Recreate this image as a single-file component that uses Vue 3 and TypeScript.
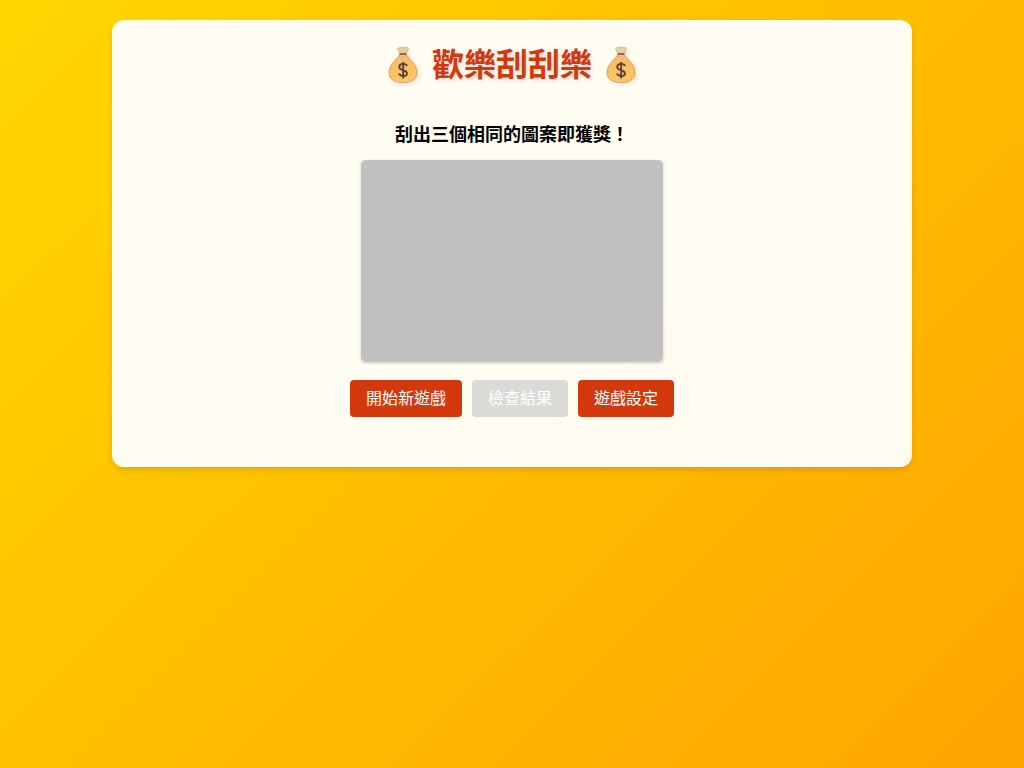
<script setup lang="ts">
import { onMounted, ref } from 'vue'

const card = ref<HTMLCanvasElement | null>(null)
const checkable = ref<boolean>(false)

function cover(): void {
  const ctx = card.value?.getContext('2d')
  if (!ctx) return
  ctx.fillStyle = '#c0c0c0'
  ctx.fillRect(0, 0, 300, 200)
}

onMounted(cover)
</script>

<template>
  <div class="page">
    <svg class="defs" width="0" height="0" aria-hidden="true">
      <defs>
        <linearGradient id="bag-fill" x1="0" y1="0" x2="0" y2="1">
          <stop offset="0" stop-color="#f3b974" />
          <stop offset="0.45" stop-color="#f9bf66" />
          <stop offset="1" stop-color="#ffc765" />
        </linearGradient>
        <symbol id="money-bag" viewBox="0 0 30 38">
          <path d="M12 8C11.300 6 10.200 4 9.500 2.500C10.500 1.300 12 2 13 1.600C14.500 1 15.500 1.800 16.500 1.500C18 1.200 19.800 1.500 20.500 2.500C19.800 4 18.700 6 18 8Z" fill="#e8cda3" stroke="#cda974" stroke-width="0.7" />
          <path d="M12 8C9.500 13 1 18 1 26.500C1 33.500 7 36.500 15 36.500S29 33.500 29 26.500C29 18 20.500 13 18 8Z" fill="url(#bag-fill)" stroke="#cc9850" stroke-width="0.8" />
          <path d="M12.200 8H17.800" fill="none" stroke="#79563f" stroke-width="1.600" stroke-linecap="round" />
          <path d="M19 20C18 17 11.200 17 11.200 21C11.200 25 19 23.500 19 27.500C19 31.300 12 30.500 11 27.500M15.200 16V32.500" fill="none" stroke="#5d4037" stroke-width="1.9" />
        </symbol>
      </defs>
    </svg>
    <main class="panel">
      <h1>
        <svg class="bag" role="img" aria-label="💰"><use href="#money-bag" /></svg>
        <span>歡樂刮刮樂</span>
        <svg class="bag" role="img" aria-label="💰"><use href="#money-bag" /></svg>
      </h1>
      <section class="game">
        <h3>刮出三個相同的圖案即獲獎！</h3>
        <canvas ref="card" class="card" width="300" height="200"></canvas>
        <div class="controls">
          <button type="button" @click="cover">開始新遊戲</button>
          <button type="button" :disabled="!checkable">檢查結果</button>
          <button type="button">遊戲設定</button>
        </div>
      </section>
    </main>
  </div>
</template>

<style>
body {
  margin: 0;
}
</style>

<style scoped>
.page {
  box-sizing: border-box;
  min-height: 100vh;
  padding: 20px;
  background: linear-gradient(135deg, #ffd700, #ffa500);
  font-family: "Liberation Sans", "Noto Sans CJK TC", sans-serif;
  text-align: center;
}

.defs {
  position: absolute;
}

.panel {
  box-sizing: border-box;
  max-width: 800px;
  margin: 0 auto;
  padding: 20px;
  border-radius: 12px;
  background: rgba(255, 255, 255, 0.945);
  box-shadow: 0 4px 6px rgba(0, 0, 0, 0.1);
}

h1 {
  display: flex;
  align-items: center;
  justify-content: center;
  gap: 14px;
  margin: 0 0 20px;
  color: #d4380d;
  font-size: 32px;
  line-height: 50px;
  text-shadow: 2px 2px 4px rgba(0, 0, 0, 0.1);
}

.bag {
  width: 30px;
  height: 38px;
  filter: drop-shadow(2px 2px 2px rgba(0, 0, 0, 0.1));
}

.game {
  padding: 10px 0 30px;
}

h3 {
  margin: 0 0 10px;
  color: #000;
  font-size: 18px;
  line-height: 30px;
}

.card {
  display: block;
  margin: 0 auto 18px;
  border: 1px solid #c4c4c2;
  border-radius: 4px;
  box-shadow: 0 1px 3px rgba(0, 0, 0, 0.2);
}

.controls {
  display: flex;
  justify-content: center;
  gap: 10px;
}

button {
  padding: 9px 16px 8px;
  border: 0;
  border-radius: 4px;
  background: #d4380d;
  color: #fff;
  font-family: inherit;
  font-size: 16px;
  line-height: 20px;
  cursor: pointer;
}

button:disabled {
  background: #dadad7;
  cursor: not-allowed;
}
</style>
